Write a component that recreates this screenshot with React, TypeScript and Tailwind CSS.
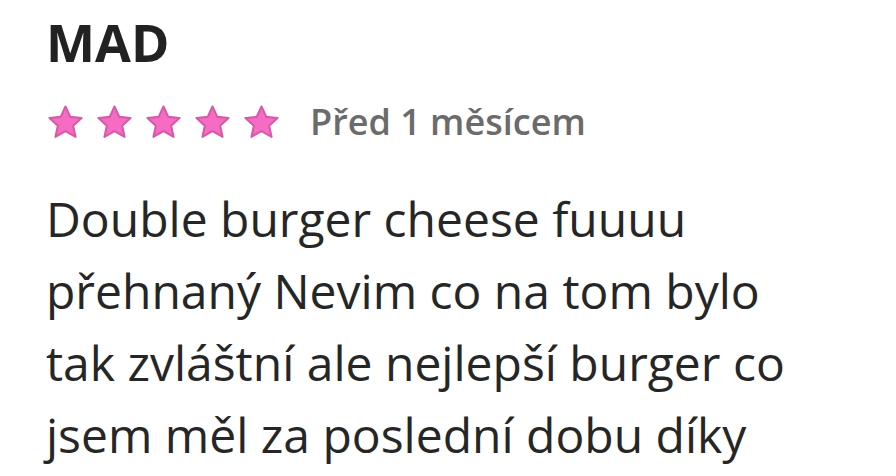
const body =
  "Double burger cheese fuuuu přehnaný Nevim co na tom bylo tak zvláštní ale nejlepší burger co jsem měl za poslední dobu díky";

function Star() {
  return (
    <svg viewBox="0 0 24 24" className="h-[41px] w-[41px]">
      <path
        d="M12 2.6l2.8 6.1 6.6.7-4.9 4.5 1.4 6.5L12 17.1l-5.9 3.3 1.4-6.5-4.9-4.5 6.6-.7z"
        fill="#f66cc4"
        stroke="#d65aa6"
        strokeWidth="1.2"
        strokeLinejoin="round"
      />
    </svg>
  );
}

export default function App() {
  return (
    <div className="min-h-screen bg-white px-[46px] pt-[10px] font-['Open_Sans',sans-serif]">
      <h1 className="text-[52px] font-bold leading-[64px] text-[#222222]">MAD</h1>

      <div className="mt-[21px] flex items-center">
        <div className="-ml-[1px] flex gap-[8px]">
          {[0, 1, 2, 3, 4].map((i) => (
            <Star key={i} />
          ))}
        </div>
        <span className="ml-[28px] text-[36px] font-semibold text-[#6b6b6b]">
          Před 1 měsícem
        </span>
      </div>

      <p className="mt-[34px] max-w-[790px] text-[48px] leading-[72px] text-[#262626]">
        {body}
      </p>
    </div>
  );
}
